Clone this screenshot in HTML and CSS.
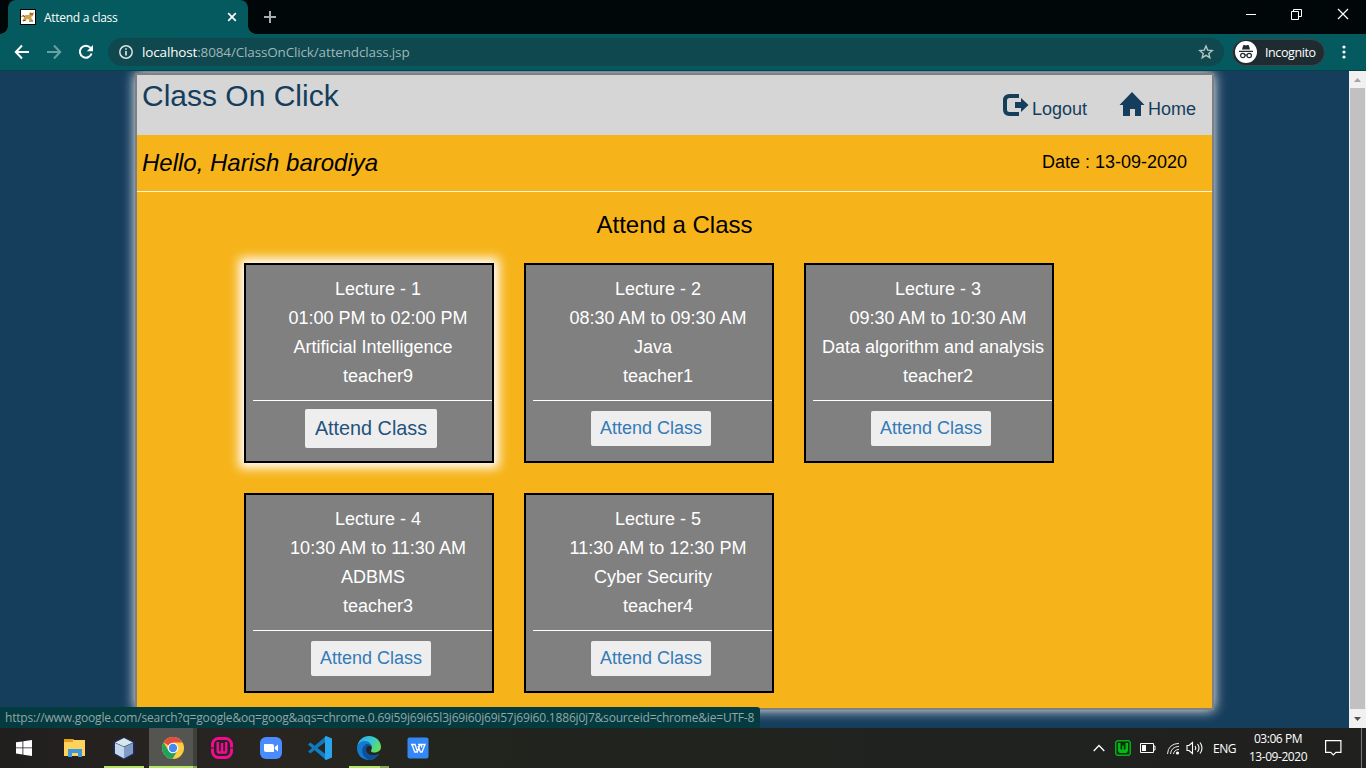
FILE: index.html
```html
<!DOCTYPE html>
<html lang="en">
<head>
<meta charset="utf-8">
<title>Attend a class</title>
<link rel="stylesheet" href="styles.css">
</head>
<body>
<div class="screen">
  <div class="tabbar">
    <div class="tab">
      <svg class="favicon" width="16" height="16" viewBox="0 0 16 16"><path fill="#000" d="M0 0h16v16H0z"/><path fill="#fff" d="M1 1h14v14H1z"/><path d="M2 12l2-3-1-2 3-1 3 0 1-3 2 1 2-1-1 4-2 1 2 4-3-1-3-1-3 2z" fill="#d3a34a"/><path d="M1.500 7.500l2-1 1 1.500M3 12l3-1M9 12h4M10 5h3" stroke="#594637" fill="none"/></svg>
      <span class="tab-title">Attend a class</span>
      <svg class="tab-close" width="10" height="10" viewBox="0 0 10 10"><path d="M1.200 1.200l7.600 7.600M8.800 1.200L1.200 8.800" stroke="#fff" stroke-width="1.700"/></svg>
    </div>
    <svg class="new-tab" width="12" height="12" viewBox="0 0 12 12"><path d="M6 0v12M0 6h12" stroke="#a9adad" stroke-width="2"/></svg>
    <div class="window-controls">
      <svg width="10" height="10" viewBox="0 0 10 10"><path d="M0 5.500h10" stroke="#fff"/></svg>
      <svg width="11" height="11" viewBox="0 0 11 11"><path d="M.5 2.500h7v8h-7zM2.500 2.500v-2h8v7h-3" fill="none" stroke="#fff"/></svg>
      <svg width="12" height="12" viewBox="0 0 12 12"><path d="M1 1l10 10M11 1L1 11" stroke="#fff" stroke-width="1.200"/></svg>
    </div>
  </div>

  <div class="toolbar">
    <div class="nav">
      <svg width="16" height="16" viewBox="0 0 16 16"><path d="M15 8H2M8 1.500L1.800 8 8 14.500" fill="none" stroke="#fff" stroke-width="2"/></svg>
      <svg width="16" height="16" viewBox="0 0 16 16"><path d="M1 8h13M8 1.500L14.200 8 8 14.500" fill="none" stroke="#69a0a3" stroke-width="2"/></svg>
      <svg width="16" height="16" viewBox="0 0 16 16"><path d="M13.600 9.500A6 6 0 1 1 12.500 3.800" fill="none" stroke="#fff" stroke-width="2"/><path d="M15 1v6.200H8.800z" fill="#fff"/></svg>
    </div>
    <div class="address">
      <svg width="14" height="14" viewBox="0 0 14 14"><circle cx="7" cy="7" r="6.200" fill="none" stroke="#dbe3e3" stroke-width="1.500"/><path d="M7 6v4.500M7 3.200v1.600" stroke="#dbe3e3" stroke-width="1.700"/></svg>
      <span class="url"><b>localhost</b>:8084/ClassOnClick/attendclass.jsp</span>
      <svg class="star" width="16" height="16" viewBox="0 0 16 16"><path d="M8 2l1.700 4.100 4.500.4-3.400 2.900 1 4.300L8 11.400l-3.800 2.300 1-4.300L1.800 6.500l4.500-.4z" fill="none" stroke="#b6c4c5" stroke-width="1.400"/></svg>
    </div>
    <div class="incognito">
      <svg width="22" height="22" viewBox="0 0 22 22"><circle cx="11" cy="11" r="11" fill="#fff"/><path d="M7 8.500L8.200 4.300l1.300-.3 1.500.6 1.500-.6 1.300.3L15 8.500zM4 9.700h14v1.300H4z" fill="#222b2f"/><g fill="none" stroke="#222b2f" stroke-width="1.200"><circle cx="7.800" cy="14.500" r="2.200"/><circle cx="14.200" cy="14.500" r="2.200"/><path d="M10 14.300q1-.7 2 0"/></g></svg>
      <span>Incognito</span>
    </div>
    <svg class="more" width="4" height="14" viewBox="0 0 4 14"><g fill="#fff"><circle cx="2" cy="2" r="1.600"/><circle cx="2" cy="7" r="1.600"/><circle cx="2" cy="12" r="1.600"/></g></svg>
  </div>

  <div class="viewport">
    <main class="panel">
      <header class="site-header">
        <h1>Class On Click</h1>
        <nav class="links">
          <a class="logout"><svg width="26" height="24" viewBox="0 0 26 24"><path d="M16 2H6.500Q2 2 2 6.500v9Q2 20 6.500 20H16" fill="none" stroke="#153d5c" stroke-width="4"/><path d="M12 8h6V4l7.500 7L18 18v-4h-6z" fill="#153d5c"/></svg><span>Logout</span></a>
          <a class="home"><svg width="26" height="25" viewBox="0 0 26 25"><path d="M13 0L25.500 13H22v11h-6v-7h-5v7H4V13H.5z" fill="#153d5c"/></svg><span>Home</span></a>
        </nav>
      </header>
      <div class="greeting"><i>Hello, Harish barodiya</i><span>Date : 13-09-2020</span></div>
      <h2>Attend a Class</h2>
      <div class="cards">
        <section class="card active"><p>Lecture - 1</p><p>01:00 PM to 02:00 PM</p><p class="subject">Artificial Intelligence</p><p>teacher9</p><hr><a class="button">Attend Class</a></section>
        <section class="card"><p>Lecture - 2</p><p>08:30 AM to 09:30 AM</p><p class="subject">Java</p><p>teacher1</p><hr><a class="button">Attend Class</a></section>
        <section class="card"><p>Lecture - 3</p><p>09:30 AM to 10:30 AM</p><p class="subject">Data algorithm and analysis</p><p>teacher2</p><hr><a class="button">Attend Class</a></section>
        <section class="card"><p>Lecture - 4</p><p>10:30 AM to 11:30 AM</p><p class="subject">ADBMS</p><p>teacher3</p><hr><a class="button">Attend Class</a></section>
        <section class="card"><p>Lecture - 5</p><p>11:30 AM to 12:30 PM</p><p class="subject">Cyber Security</p><p>teacher4</p><hr><a class="button">Attend Class</a></section>
      </div>
    </main>
    <div class="scrollbar">
      <svg width="17" height="17" viewBox="0 0 17 17"><path d="M5 11h7L8.500 7z" fill="#a3a3a3"/></svg>
      <div class="thumb"></div>
      <svg width="17" height="19" viewBox="0 0 17 19"><path d="M5 8h7l-3.500 4z" fill="#505050"/></svg>
    </div>
    <div class="status">https://www.google.com/search?q=google&amp;oq=goog&amp;aqs=chrome.0.69i59j69i65l3j69i60j69i57j69i60.1886j0j7&amp;sourceid=chrome&amp;ie=UTF-8</div>
  </div>

  <footer class="taskbar">
    <div class="apps">
      <div class="app"><svg width="24" height="24" viewBox="0 0 24 24"><path fill="#fff" d="M2 6.300l6.500-.9v6.100H2zM9.300 5.300L18 4v7.500H9.300zM2 12.300h6.500v6.200L2 17.600zM9.300 12.300H18V20l-8.700-1.300z"/></svg></div>
      <div class="app"><svg width="24" height="24" viewBox="0 0 24 24"><path d="M1 3h9l1 1h11v16H1z" fill="#ffd35b"/><path d="M1 3h9v3H1z" fill="#e5a013"/><path d="M5 13h14v8h-4v-4H9v4H5z" fill="#3b97df"/></svg></div>
      <div class="app open"><svg width="24" height="24" viewBox="0 0 24 24"><path d="M12 .8l10.500 5v12.500L12 23.700 1.500 18.300V5.800z" fill="#202c61"/><path d="M12 2l9 4.500-9 4-9-4z" fill="#d5e9e6"/><path d="M3 7l9 4v11.500L3 17.500z" fill="#c3d7ec"/><path d="M21 7l-9 4v11.500l9-5z" fill="#7f9cc5"/></svg></div>
      <div class="app current"><svg width="24" height="24" viewBox="0 0 24 24"><circle cx="12" cy="12" r="11" fill="#ffcd40"/><path d="M12 12L2.500 6.500A11 11 0 0 1 21.500 6.500H12z" fill="#e24d3f"/><path d="M2.500 6.500A11 11 0 0 0 11.500 23l5-8.500L12 12l-4.500 2.500z" fill="#22a15c"/><circle cx="12" cy="12" r="5.300" fill="#fff"/><circle cx="12" cy="12" r="4.200" fill="#4689f2"/></svg></div>
      <div class="app"><svg width="24" height="24" viewBox="0 0 24 24"><rect x="2.500" y="2.500" width="19" height="19" rx="6" fill="none" stroke="#f20a91" stroke-width="3"/><path d="M7.800 6v9.500q0 1 1 1h6.400q1 0 1-1V6M12 7v9" fill="none" stroke="#f20a91" stroke-width="2.500"/><path d="M0 12h4.500M19.500 12H24" stroke="#292622" stroke-width="1.200"/></svg></div>
      <div class="app"><svg width="24" height="24" viewBox="0 0 24 24"><rect x="1" y="1" width="22" height="22" rx="6" fill="#4a8cff"/><path d="M5 8h8q2 0 2 2v6H7q-2 0-2-2zM15.800 11L19 8.500v7L15.800 13z" fill="#fff"/></svg></div>
      <div class="app"><svg width="24" height="24" viewBox="0 0 24 24"><path d="M0 8.500l2.300-2L18 18.500V24z" fill="#0e80c8"/><path d="M0 15.500l2.300 2L18 5.500V0z" fill="#1477b8"/><path d="M18 0l6 2.500v19L18 24l-1-.8V.8z" fill="#29a5ed"/></svg></div>
      <div class="app open grouped"><svg width="24" height="24" viewBox="0 0 24 24"><defs><linearGradient id="wave" x1="0" y1="0" x2="1" y2=".6"><stop offset=".2" stop-color="#2fb3e3"/><stop offset=".6" stop-color="#3bcbc5"/><stop offset="1" stop-color="#62df5c"/></linearGradient></defs><path d="M.3 11C1 4 6 0 12 0c7 0 12 5 12 11 0 4-3.500 5.500-7 5.500-3 0-3.500-1.500-2.500-3C17 9 8 2.500.3 11z" fill="url(#wave)"/><path d="M0 12c.5-4.500 4-7 8-7 4 0 7 3 7 6.500-1-2-3-2.500-4.500-1.500-4 3-1 9 5 9.500 3 0 4.500-.7 6.500-1.800C19.500 22 16 24 12 24 5 24 0 19 0 12z" fill="#157bd0"/><path d="M8.500 8.500c2.500-1 5 0 6 2.500-1-1.500-3-1.500-4-.7-3.500 3.500 0 8.700 5 9.200 3 .2 4.500-.7 6.500-1.800C20 21 16 24 12 24 4.500 21 3 12 8.500 8.500z" fill="#0d4f98"/></svg></div>
      <div class="app"><svg width="24" height="24" viewBox="0 0 24 24"><rect x="1.500" y="1.500" width="21" height="21" rx="2" fill="#3487f5"/><path d="M5 8.500h4l2.500 7L14 8.500h5l-3 7.500h-1.500l-2.500-6M6 8.500l2.800 7.500h2M12 8.500h3l1 3" fill="none" stroke="#fff" stroke-width="1.300"/></svg></div>
    </div>
    <div class="tray">
      <svg class="chevron" width="12" height="8" viewBox="0 0 12 8"><path d="M.7 7L6 1.500 11.300 7" fill="none" stroke="#fff" stroke-width="1.300"/></svg>
      <svg class="wamp" width="16" height="16" viewBox="0 0 16 16"><path d="M2 0h12l2 2v12l-2 2H2l-2-2V2z" fill="#08ad16"/><path d="M2.500 1.500h11l1 1v11l-1 1h-11l-1-1v-11z" fill="#06310a"/><path d="M3 3h2.500v6.500h1.700V5.500h1.600v4h1.700V3H13v8l-1.500 2h-7L3 11z" fill="#07b916"/></svg>
      <svg class="battery" width="16" height="10" viewBox="0 0 16 10"><path d="M.5.5h13v9H.5zM14 3h1v4h-1" fill="none" stroke="#fff"/><path fill="#fff" d="M2 2h4v6H2z"/></svg>
      <svg class="wifi" width="14" height="13" viewBox="0 0 14 13"><g fill="none" stroke="#e9e9e9"><path d="M1.500 12Q2 2 13 1.300"/><path d="M4.500 12Q5 5 13 4.300"/><path d="M7.500 12Q8 8 13 7.300"/></g><circle cx="11.500" cy="11" r="1.600" fill="#fff"/></svg>
      <svg class="sound" width="18" height="14" viewBox="0 0 18 14"><path d="M1 4.500h2L6.500 1.500v11L3 9.500H1zM9 5q1.500 2 0 4M11.500 3q3 4 0 8M14 1.500q4 5.500 0 11" fill="none" stroke="#fff" stroke-width="1.100"/></svg>
      <span class="lang">ENG</span>
      <div class="clock"><span>03:06 PM</span><span class="day">13-09-2020</span></div>
      <svg class="note" width="17" height="16" viewBox="0 0 17 16"><path d="M.6.6h15.300v11.700h-5L8.300 15l-2.600-2.700H.6z" fill="none" stroke="#fff" stroke-width="1.200"/></svg>
      <div class="peek"></div>
    </div>
  </footer>
</div>
</body>
</html>
```
FILE: styles.css
```css
* { box-sizing: border-box; }
body { margin: 0; overflow: hidden; font-family: "Liberation Sans", Arial, sans-serif; }
svg { display: block; flex: none; }
.screen { width: 1366px; height: 768px; display: flex; flex-direction: column; overflow: hidden; }
.tabbar, .toolbar, .status, .taskbar { font-family: "Open Sans", "Noto Sans", sans-serif; }

.tabbar { height: 34px; background: #000708; display: flex; align-items: center; padding-left: 8px; flex: none; }
.tab { position: relative; width: 240px; height: 34px; border-radius: 8px 8px 0 0; background: #055a60; display: flex; align-items: center; padding: 0 11px 0 12px; color: #fff; }
.tab::before, .tab::after { content: ""; position: absolute; bottom: 0; width: 8px; height: 8px; }
.tab::before { left: -8px; background: radial-gradient(circle at 0 0, transparent 7.5px, #055a60 8px); }
.tab::after { right: -8px; background: radial-gradient(circle at 100% 0, transparent 7.5px, #055a60 8px); }
.tab-title { margin-left: 8px; font-size: 12px; letter-spacing: -.28px; flex: 1; }
.new-tab { margin-left: 16px; }
.window-controls { margin-left: auto; display: flex; align-items: center; gap: 35px; padding: 0 17px 6px 0; }

.toolbar { height: 37px; flex: none; background: #055a60; border-bottom: 1px solid #044248; display: flex; align-items: center; padding-left: 14px; }
.nav { display: flex; gap: 16px; width: 94px; }
.address { width: 1116px; height: 28px; border-radius: 14px; background: #0f484e; display: flex; align-items: center; padding: 0 10px 0 11px; }
.url { margin-left: 9px; font-size: 13.5px; letter-spacing: -.15px; color: #9fb7b9; line-height: 20px; flex: 1; }
.url b { font-weight: 400; color: #fff; }
.incognito { margin-left: 8px; width: 93px; height: 27px; border-radius: 14px; background: #1e2b30; border: 1px solid #39464a; display: flex; align-items: center; padding-left: 2px; color: #fff; font-size: 12.5px; letter-spacing: -.4px; }
.incognito span { margin-left: 8px; }
.more { margin-left: 17px; }

.viewport { position: relative; height: 657px; flex: none; background: #153d5c; display: flex; padding: 2px 0 0 135px; overflow: hidden; }
.panel { width: 1079px; height: 637px; border: 2px solid #808080; background: #f6b41a; box-shadow: 0 0 12px #fff; }
.site-header { height: 60px; background: #d6d6d6; color: #153d5c; display: flex; justify-content: space-between; padding: 0 16px 0 5px; }
h1 { margin: 3px 0 0; font-size: 30px; font-weight: 400; line-height: 36px; }
.links { display: flex; gap: 32px; font-size: 18px; line-height: 22px; }
.links a { display: flex; align-items: flex-start; }
.links span { margin-top: 23px; }
.logout svg { margin: 19px 3px 0 0; }
.home svg { margin: 17px 3px 0 0; }
.greeting { height: 57px; display: flex; justify-content: space-between; border-bottom: 1px solid #fff4dc; padding: 0 25px 0 5px; font-size: 24px; line-height: 56px; }
.greeting span { font-size: 18px; line-height: 54px; }
h2 { margin: 17px 0 22px; font-size: 24px; font-weight: 400; line-height: 32px; text-align: center; }
.cards { display: grid; grid-template-columns: repeat(3, 250px); grid-auto-rows: 200px; gap: 30px; padding-left: 107px; }
.card { background: #808080; border: 2px solid #000; color: #fff; padding: 10px 0 0 7px; text-align: center; font-size: 18px; }
.card.active { box-shadow: 0 0 10px 5px #fff; }
.card p { margin: 0; padding-left: 11px; height: 29px; line-height: 28px; white-space: nowrap; }
.card .subject { padding-left: 1px; }
.card hr { margin: 9px 0 10px; border: 0; height: 1px; background: #fff; }
.button { display: block; width: 120px; height: 35px; margin: 0 0 0 58px; background: #eee; border-radius: 2px; color: #337ab7; line-height: 34px; }
.active .button { width: 132px; height: 39px; margin: -2px 0 0 52px; font-size: 19.8px; line-height: 38px; color: #23527c; }
.scrollbar { width: 17px; margin: -2px 0 0 auto; background: #f1f1f1; display: flex; flex-direction: column; }
.thumb { flex: 1; margin: 0 1px; background: #c1c1c1; }
.status { position: absolute; left: 0; bottom: 0; width: 760px; height: 21px; background: #033b40; color: #94a5a6; border-radius: 0 3px 0 0; padding-left: 5px; font-size: 12px; letter-spacing: -.19px; line-height: 21px; white-space: nowrap; }

.taskbar { height: 40px; flex: none; background: linear-gradient(90deg, #211f1e, #292521 20%, #22251e 32%, #20221f 65%, #20211f); color: #fff; display: flex; justify-content: space-between; }
.apps { display: flex; padding-left: 1px; }
.app { width: 49px; height: 40px; display: flex; align-items: center; justify-content: center; }
.app.open { background: linear-gradient(#b4e463, #b4e463) 5px 38px / 40px 2px no-repeat; }
.app.grouped { background-image: linear-gradient(90deg, #b4e463 31px, #86a653 31px); }
.app.current { background: linear-gradient(90deg, #b4e463 44px, #86a653 44px) 1px 38px / 48px 2px no-repeat, linear-gradient(90deg, transparent 1px, #545550 1px, #545550 45px, #3e403b 45px); }
.tray { display: flex; align-items: center; }
.wamp { margin-left: 10px; }
.battery { margin-left: 9px; }
.wifi { margin-left: 10px; }
.sound { margin-left: 6px; }
.lang { width: 25px; margin-left: 9px; font-size: 12px; letter-spacing: -.5px; }
.clock { width: 60px; margin-left: 10px; display: flex; flex-direction: column; text-align: center; font-size: 12px; line-height: 18px; letter-spacing: -.45px; white-space: nowrap; }
.note { margin-left: 17px; }
.peek { width: 1px; height: 40px; background: #777; margin: 0 4px 0 19px; }
```
